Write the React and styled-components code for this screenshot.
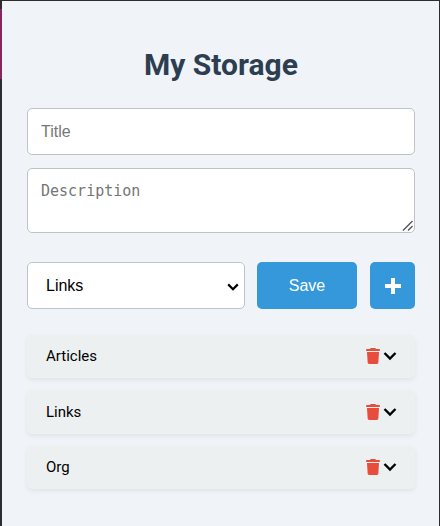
import React from 'react'
import styled, { createGlobalStyle } from 'styled-components'

const GlobalStyle = createGlobalStyle`
    html, body {
        margin: 0;
        padding: 0;
        background: #2b2d31;
    }
    * {
        box-sizing: border-box;
    }
`

const categories = ['Articles', 'Links', 'Org']

const selectArrow = encodeURIComponent(
    `<svg xmlns="http://www.w3.org/2000/svg" width="12" height="8" viewBox="0 0 12 8"><path d="M1.2 1.4L6 6.2l4.8-4.8" fill="none" stroke="#000" stroke-width="2.2"/></svg>`
)

const resizeGrip = encodeURIComponent(
    `<svg xmlns="http://www.w3.org/2000/svg" width="15" height="15" viewBox="0 0 15 15"><path d="M4 13.5L13.5 4M9 13.5L13.5 9" fill="none" stroke="#555" stroke-width="1.4"/></svg>`
)

const App = () => {
    return (
        <>
            <GlobalStyle />
            <Frame>
                <Panel>
                    <Title>My Storage</Title>
                    <Form>
                        <TitleInput placeholder="Title" />
                        <DescriptionInput placeholder="Description" />
                        <Controls>
                            <CategorySelect defaultValue="Links">
                                {categories.map(name => (
                                    <option key={name}>{name}</option>
                                ))}
                            </CategorySelect>
                            <SaveButton>Save</SaveButton>
                            <AddButton aria-label="Add">
                                <PlusIcon />
                            </AddButton>
                        </Controls>
                    </Form>
                    <List>
                        {categories.map(name => (
                            <Row key={name}>
                                <RowName>{name}</RowName>
                                <RowIcons>
                                    <TrashIcon />
                                    <ChevronIcon />
                                </RowIcons>
                            </Row>
                        ))}
                    </List>
                </Panel>
            </Frame>
        </>
    )
}

export default App

const PlusIcon = () => (
    <svg width="16" height="16" viewBox="0 0 16 16">
        <path d="M6 0h4v6h6v4h-6v6H6v-6H0V6h6z" fill="#fff" />
    </svg>
)

const TrashIcon = () => (
    <svg width="14" height="16" viewBox="0 0 448 512">
        <path
            fill="#e74c3c"
            d="M135.2 17.7L128 32H32C14.3 32 0 46.3 0 64S14.3 96 32 96H416c17.7 0 32-14.3 32-32s-14.3-32-32-32H320l-7.2-14.3C307.4 6.8 296.3 0 284.2 0H163.8c-12.1 0-23.2 6.8-28.6 17.7zM416 128H32L53.2 467c1.6 25.3 22.6 45 47.9 45H346.9c25.3 0 46.3-19.7 47.9-45L416 128z"
        />
    </svg>
)

const ChevronIcon = () => (
    <svg width="14" height="14" viewBox="0 0 14 14">
        <path d="M1.5 4l5.5 5.5L12.5 4" fill="none" stroke="#000" strokeWidth="2.4" />
    </svg>
)

const Frame = styled.div`
    height: 526px;
    padding: 1px 1px 0 2px;
    position: relative;
    overflow: hidden;
    &:before {
        position: absolute;
        content: '';
        top: 9px;
        left: 0;
        width: 2px;
        height: 70px;
        background: #86265c;
    }
`

const Panel = styled.div`
    height: 525px;
    background: #f0f4f8;
    padding: 32px 24px 0 25px;
`

const Title = styled.h1`
    margin: 14px 0 25px;
    font-family: Roboto, sans-serif;
    font-size: 30px;
    line-height: 36px;
    font-weight: 700;
    color: #2c3e50;
    text-align: center;
`

const Form = styled.div`
    display: flex;
    flex-direction: column;
`

const fieldBorder = `
    border: 1px solid #bdc3c7;
    border-radius: 5px;
    background-color: #fff;
    outline: none;
`

const TitleInput = styled.input`
    ${fieldBorder}
    width: 100%;
    height: 47px;
    padding: 0 13px;
    font-family: "Liberation Sans", Arial, sans-serif;
    font-size: 16px;
    &::placeholder {
        color: #757575;
    }
`

const DescriptionInput = styled.textarea`
    ${fieldBorder}
    display: block;
    width: 100%;
    height: 65px;
    margin-top: 13px;
    padding: 13px;
    font-family: "DejaVu Sans Mono", monospace;
    font-size: 15px;
    &::placeholder {
        color: #757575;
    }
    &::-webkit-resizer {
        background: url("data:image/svg+xml,${resizeGrip}") no-repeat;
    }
`

const Controls = styled.div`
    display: flex;
    align-items: stretch;
    margin-top: 29px;
    height: 47px;
`

const CategorySelect = styled.select`
    ${fieldBorder}
    appearance: none;
    width: 218px;
    padding: 0 14px 0 18px;
    background-image: url("data:image/svg+xml,${selectArrow}");
    background-repeat: no-repeat;
    background-position: 199px 20px;
    font-family: "Liberation Sans", Arial, sans-serif;
    font-size: 16px;
    color: #000;
`

const SaveButton = styled.button`
    width: 100px;
    margin-left: 12px;
    border: none;
    border-radius: 5px;
    background: #3498db;
    color: #fff;
    font-family: "Liberation Sans", Arial, sans-serif;
    font-size: 16px;
`

const AddButton = styled.button`
    display: flex;
    align-items: center;
    justify-content: center;
    width: 45px;
    margin-left: 13px;
    padding: 0;
    border: none;
    border-radius: 5px;
    background: #3498db;
`

const List = styled.div`
    display: flex;
    flex-direction: column;
    gap: 12px;
    margin-top: 25.5px;
`

const Row = styled.div`
    display: flex;
    align-items: center;
    justify-content: space-between;
    height: 43.5px;
    padding: 0 18px 0 19px;
    background: #ecf0f1;
    border-radius: 5px;
    box-shadow: 0 2px 5px rgba(0, 0, 0, 0.07);
`

const RowName = styled.span`
    font-family: Roboto, sans-serif;
    font-size: 15px;
    color: #000;
`

const RowIcons = styled.div`
    display: flex;
    align-items: center;
    gap: 3px;
`
